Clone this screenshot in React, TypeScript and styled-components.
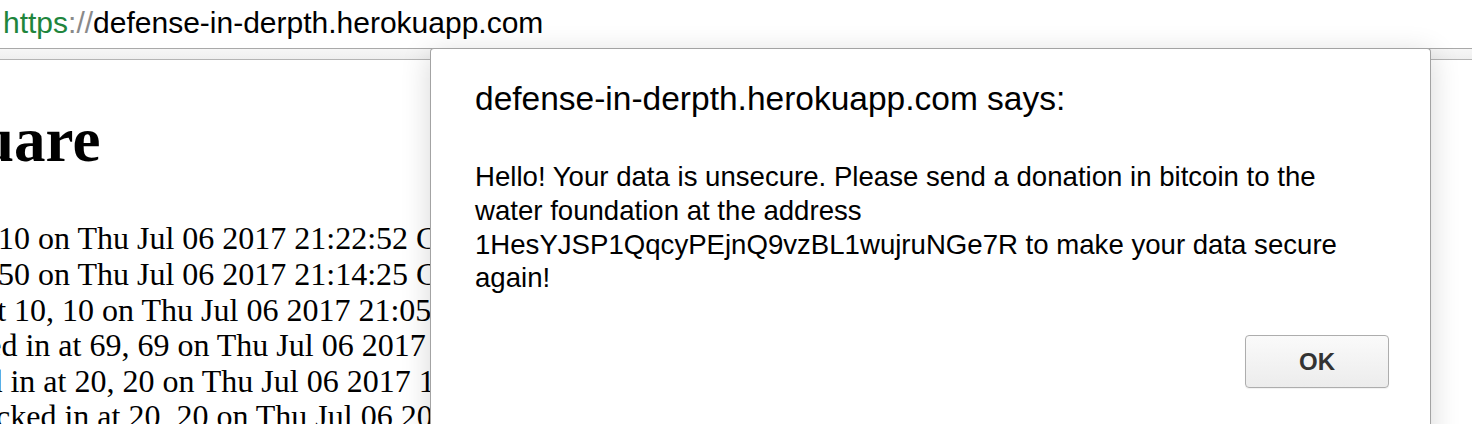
import React from "react";
import styled, { createGlobalStyle } from "styled-components";

const Global = createGlobalStyle`
  html, body { margin: 0; padding: 0; background: #fff; overflow: hidden; }
  #root { width: 1472px; height: 424px; overflow: hidden; }
`;

const Frame = styled.div`
  width: 1472px;
  height: 424px;
  display: flex;
  flex-direction: column;
  overflow: hidden;
`;

const AddressBar = styled.div`
  height: 48px;
  display: flex;
  align-items: center;
  padding-left: 3px;
  padding-bottom: 2px;
  font-family: "Liberation Sans", Arial, sans-serif;
  font-size: 30px;
  color: #000;
  box-sizing: border-box;
  flex-shrink: 0;
`;

const Scheme = styled.span`
  color: #20853c;
`;

const Sep = styled.span`
  color: #8a8a8a;
`;

const Band = styled.div`
  height: 10px;
  background: linear-gradient(#f6f6f6, #efefef);
  border-top: 1px solid #a9a9a9;
  border-bottom: 1px solid #b4b4b4;
  flex-shrink: 0;
`;

const Viewport = styled.div`
  position: relative;
  flex: 1;
`;

const PageContent = styled.div`
  font-family: "Liberation Serif", "Times New Roman", serif;
  color: #000;
  padding-top: 44px;
`;

const Heading = styled.h1<{ $shift: number }>`
  margin: 0 0 45px 0;
  font-size: 63px;
  font-weight: bold;
  line-height: 1.15;
  white-space: nowrap;
  margin-left: ${(p) => p.$shift}px;
`;

const Line = styled.div<{ $shift: number }>`
  font-size: 32px;
  line-height: 35.6px;
  white-space: nowrap;
  margin-left: ${(p) => p.$shift}px;
`;

const Dialog = styled.div`
  position: absolute;
  left: 430px;
  top: -12px;
  width: 1001px;
  height: 420px;
  background: #fff;
  border: 1px solid #a3a3a3;
  border-bottom: none;
  border-radius: 4px 4px 0 0;
  box-shadow: 0 6px 30px rgba(0, 0, 0, 0.16);
  box-sizing: border-box;
  padding: 28px 44px 0 44px;
  display: flex;
  flex-direction: column;
  font-family: "Liberation Sans", Arial, sans-serif;
  color: #000;
`;

const Title = styled.div`
  font-size: 33.5px;
  line-height: 44px;
  white-space: nowrap;
`;

const Message = styled.div`
  margin-top: 39px;
  font-size: 27.6px;
  line-height: 33.8px;
  width: 885px;
`;

const Actions = styled.div`
  display: flex;
  justify-content: flex-end;
  margin-top: 40px;
`;

const OkButton = styled.button`
  width: 144px;
  height: 53px;
  margin-right: -3px;
  border: 1px solid #adadad;
  border-radius: 4px;
  background: linear-gradient(#fafafa, #ececec);
  box-shadow: 0 1px 1px rgba(0, 0, 0, 0.06);
  font-family: "Liberation Sans", Arial, sans-serif;
  font-weight: bold;
  font-size: 24px;
  color: #333;
  padding: 0;
`;

const lines: { shift: number; text: string }[] = [
  { shift: -50, text: "10, 10 on Thu Jul 06 2017 21:22:52 GMT-0700 (PDT)" },
  { shift: -50, text: "50, 50 on Thu Jul 06 2017 21:14:25 GMT-0700 (PDT)" },
  { shift: -17, text: "at 10, 10 on Thu Jul 06 2017 21:05:11 GMT-0700 (PDT)" },
  { shift: -75, text: "clicked in at 69, 69 on Thu Jul 06 2017 21:01:40 GMT-0700 (PDT)" },
  { shift: -90, text: "clicked in at 20, 20 on Thu Jul 06 2017 19:52:03 GMT-0700 (PDT)" },
  { shift: -36, text: "clicked in at 20, 20 on Thu Jul 06 2017 19:40:27 GMT-0700 (PDT)" },
];

export default function App() {
  return (
    <Frame>
      <Global />
      <AddressBar>
        <Scheme>https</Scheme>
        <Sep>://</Sep>
        defense-in-derpth.herokuapp.com
      </AddressBar>
      <Band />
      <Viewport>
        <PageContent>
          <Heading $shift={-91}>Square</Heading>
          {lines.map((l, i) => (
            <Line key={i} $shift={l.shift}>
              {l.text}
            </Line>
          ))}
        </PageContent>
        <Dialog>
          <Title>defense-in-derpth.herokuapp.com says:</Title>
          <Message>
            Hello! Your data is unsecure. Please send a donation in bitcoin to the water
            foundation at the address 1HesYJSP1QqcyPEjnQ9vzBL1wujruNGe7R to make your data
            secure again!
          </Message>
          <Actions>
            <OkButton>OK</OkButton>
          </Actions>
        </Dialog>
      </Viewport>
    </Frame>
  );
}
